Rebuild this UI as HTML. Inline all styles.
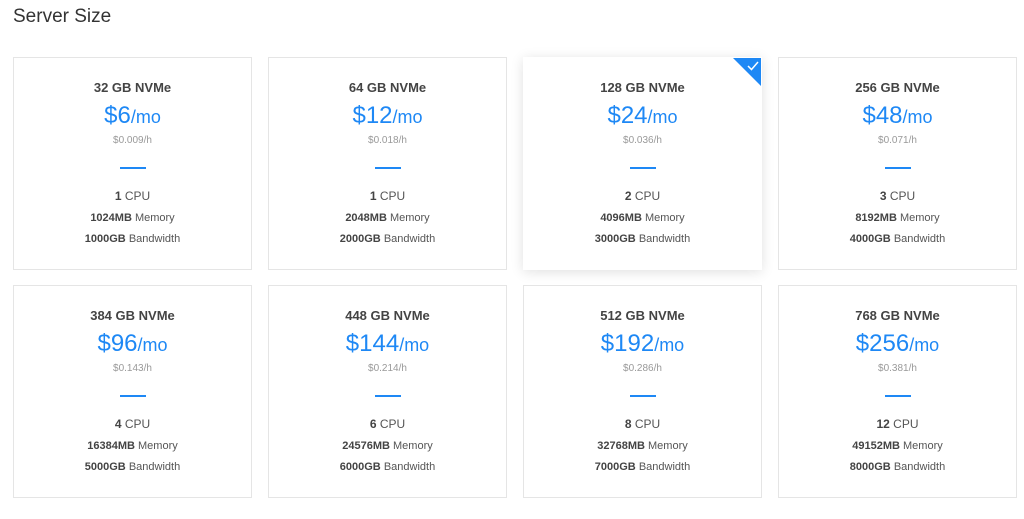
<!DOCTYPE html>
<html><head><style>
*{margin:0;padding:0;box-sizing:border-box}
body{width:1024px;height:519px;background:#fff;font-family:"Liberation Sans",sans-serif;color:#333;position:relative;overflow:hidden}
h1{position:absolute;left:13px;top:6px;font-size:19px;font-weight:normal;color:#333}
.card{position:absolute;width:239px;height:213px;border:1px solid #e5e5e5;background:#fff;text-align:center}
.sel{border-color:#fff;box-shadow:0 2px 12px rgba(0,0,0,.12)}
.t{position:absolute;top:22px;left:0;right:0;font-size:13px;font-weight:bold;color:#444}
.p{position:absolute;top:44px;left:0;right:0;font-size:24px;color:#1e88f5}
.p span{font-size:18px}
.h{position:absolute;top:77px;left:0;right:0;font-size:10px;color:#999}
.l{position:absolute;top:109px;left:50%;margin-left:-13px;width:26px;height:2px;background:#1e88f5}
.c{position:absolute;top:131px;left:0;right:0;font-size:12px;color:#555}
.m{position:absolute;top:154px;left:0;right:0;font-size:11px;color:#555}
.b{position:absolute;top:175px;left:0;right:0;font-size:11px;color:#555}
b{color:#444}
.tri{position:absolute;right:0;top:0;width:0;height:0;border-top:28px solid #1e88f5;border-left:28px solid transparent}
</style></head><body>
<h1>Server Size</h1>
<div class="card" style="left:13px;top:57px"><div class="t">32 GB NVMe</div><div class="p">$6<span>/mo</span></div><div class="h">$0.009/h</div><div class="l"></div><div class="c"><b>1</b> CPU</div><div class="m"><b>1024MB</b> Memory</div><div class="b"><b>1000GB</b> Bandwidth</div></div>
<div class="card" style="left:268px;top:57px"><div class="t">64 GB NVMe</div><div class="p">$12<span>/mo</span></div><div class="h">$0.018/h</div><div class="l"></div><div class="c"><b>1</b> CPU</div><div class="m"><b>2048MB</b> Memory</div><div class="b"><b>2000GB</b> Bandwidth</div></div>
<div class="card sel" style="left:523px;top:57px"><div class="tri"></div><svg style="position:absolute;right:2px;top:3px" width="12" height="10" viewBox="0 0 12 10"><path d="M1 5l3.5 3.5L11 1" stroke="#fff" stroke-width="1.5" fill="none"/></svg><div class="t">128 GB NVMe</div><div class="p">$24<span>/mo</span></div><div class="h">$0.036/h</div><div class="l"></div><div class="c"><b>2</b> CPU</div><div class="m"><b>4096MB</b> Memory</div><div class="b"><b>3000GB</b> Bandwidth</div></div>
<div class="card" style="left:778px;top:57px"><div class="t">256 GB NVMe</div><div class="p">$48<span>/mo</span></div><div class="h">$0.071/h</div><div class="l"></div><div class="c"><b>3</b> CPU</div><div class="m"><b>8192MB</b> Memory</div><div class="b"><b>4000GB</b> Bandwidth</div></div>
<div class="card" style="left:13px;top:285px"><div class="t">384 GB NVMe</div><div class="p">$96<span>/mo</span></div><div class="h">$0.143/h</div><div class="l"></div><div class="c"><b>4</b> CPU</div><div class="m"><b>16384MB</b> Memory</div><div class="b"><b>5000GB</b> Bandwidth</div></div>
<div class="card" style="left:268px;top:285px"><div class="t">448 GB NVMe</div><div class="p">$144<span>/mo</span></div><div class="h">$0.214/h</div><div class="l"></div><div class="c"><b>6</b> CPU</div><div class="m"><b>24576MB</b> Memory</div><div class="b"><b>6000GB</b> Bandwidth</div></div>
<div class="card" style="left:523px;top:285px"><div class="t">512 GB NVMe</div><div class="p">$192<span>/mo</span></div><div class="h">$0.286/h</div><div class="l"></div><div class="c"><b>8</b> CPU</div><div class="m"><b>32768MB</b> Memory</div><div class="b"><b>7000GB</b> Bandwidth</div></div>
<div class="card" style="left:778px;top:285px"><div class="t">768 GB NVMe</div><div class="p">$256<span>/mo</span></div><div class="h">$0.381/h</div><div class="l"></div><div class="c"><b>12</b> CPU</div><div class="m"><b>49152MB</b> Memory</div><div class="b"><b>8000GB</b> Bandwidth</div></div>
</body></html>
